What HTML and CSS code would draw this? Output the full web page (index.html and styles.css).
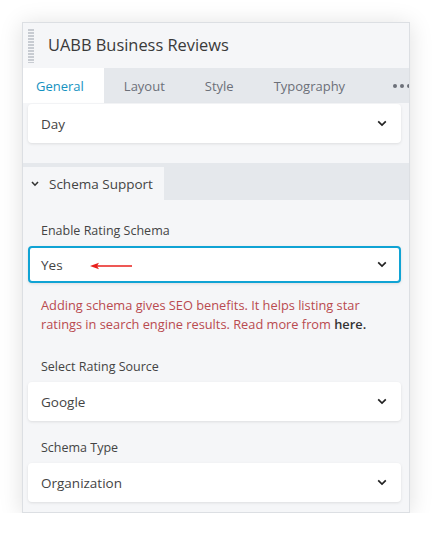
FILE: index.html
```html
<!DOCTYPE html>
<html>
<head>
<meta charset="utf-8">
<link rel="stylesheet" href="styles.css">
</head>
<body>
<div class="panel">
  <div class="header">
    <div class="grip"></div>
    <div class="title">UABB Business Reviews</div>
  </div>
  <div class="tabs">
    <div class="tab active">General</div>
    <div class="tab">Layout</div>
    <div class="tab">Style</div>
    <div class="tab">Typography</div>
    <div class="tab more"><span class="dot"></span><span class="dot"></span><span class="dot"></span></div>
  </div>
  <div class="content">
    <div class="select first">
      <span>Day</span>
      <svg class="chev" width="10" height="7" viewBox="0 0 10 7"><path d="M1.2 1.4 L5 5 L8.8 1.4" fill="none" stroke="#222" stroke-width="1.7"/></svg>
    </div>
    <div class="section">
      <div class="section-tab">
        <svg class="schev" width="8" height="6" viewBox="0 0 8 6"><path d="M1 1 L4 4.2 L7 1" fill="none" stroke="#333" stroke-width="1.6"/></svg>
        <span>Schema Support</span>
      </div>
    </div>
    <div class="fields">
      <div class="label">Enable Rating Schema</div>
      <div class="select focus">
        <span>Yes</span>
        <svg class="arrow" width="44" height="8" viewBox="0 0 44 8"><path d="M4 4 H42" stroke="#e8201c" stroke-width="1.6"/><path d="M0 4 L9 0.8 L7 4 L9 7.2 Z" fill="#e8201c"/></svg>
        <svg class="chev" width="10" height="7" viewBox="0 0 10 7"><path d="M1.2 1.4 L5 5 L8.8 1.4" fill="none" stroke="#222" stroke-width="1.7"/></svg>
      </div>
      <p class="help"><span>Adding schema gives SEO benefits. It helps listing star</span><br><span>ratings in search engine results. Read more from</span> <b class="link">here.</b></p>
      <div class="label">Select Rating Source</div>
      <div class="select">
        <span>Google</span>
        <svg class="chev" width="10" height="7" viewBox="0 0 10 7"><path d="M1.2 1.4 L5 5 L8.8 1.4" fill="none" stroke="#222" stroke-width="1.7"/></svg>
      </div>
      <div class="label">Schema Type</div>
      <div class="select">
        <span>Organization</span>
        <svg class="chev" width="10" height="7" viewBox="0 0 10 7"><path d="M1.2 1.4 L5 5 L8.8 1.4" fill="none" stroke="#222" stroke-width="1.7"/></svg>
      </div>
    </div>
  </div>
</div>
</body>
</html>
```
FILE: styles.css
```css
html, body {
  margin: 0;
  padding: 0;
  background: #ffffff;
}
body {
  font-family: "Open Sans", "Noto Sans", sans-serif;
  color: #444;
  padding: 22px 0 0 22px;
}
.panel {
  width: 386px;
  border: 1px solid #dcdfe3;
  background: #f5f6f8;
  box-shadow: 0 2px 22px rgba(0, 0, 0, 0.13);
  padding-bottom: 10px;
  overflow: hidden;
}
.header {
  height: 45px;
  display: flex;
  align-items: center;
  background: #f5f6f8;
}
.grip {
  width: 6px;
  height: 34px;
  margin-left: 5px;
  background: repeating-linear-gradient(to bottom, #c8ccd2 0 2px, transparent 2px 3px);
}
.title {
  margin-left: 14px;
  font-size: 16.4px;
  color: #3a3a3a;
  margin-top: -2px;
}
.tabs {
  height: 35px;
  display: flex;
  background: #e5e8ec;
  font-size: 13px;
  color: #6c7079;
}
.tab {
  padding: 0 20px;
  display: flex;
  align-items: center;
  flex-shrink: 0;
}
.tab.active {
  background: #ffffff;
  color: #1592c1;
  padding-left: 13px;
}
.tab.more {
  margin-left: 28px;
  gap: 3px;
  padding-right: 0;
  padding-left: 0;
}
.dot {
  width: 4px;
  height: 4px;
  border-radius: 50%;
  background: #6c7079;
  flex-shrink: 0;
}
.content {
  padding: 1px 0 0 0;
}
.select {
  height: 39px;
  margin: 0 8px 0 5px;
  background: #fff;
  border-radius: 4px;
  box-shadow: 0 1px 3px rgba(0, 0, 0, 0.1);
  display: flex;
  align-items: center;
  padding: 0 14px 0 13px;
  font-size: 13.5px;
  color: #444;
  position: relative;
}
.select span {
  flex: 1;
}
.select.focus {
  height: 33px;
  border: 2px solid #10a3d4;
  padding-left: 11px;
  padding-right: 12px;
}
.arrow {
  position: absolute;
  left: 60px;
  top: 14px;
}
.section {
  margin-top: 20px;
  height: 37px;
  background: #e5e8ec;
  display: flex;
  align-items: flex-end;
}
.section-tab {
  height: 33px;
  width: 141px;
  background: #f5f6f8;
  display: flex;
  align-items: center;
  font-size: 13.5px;
  color: #444;
}
.schev {
  margin-left: 8px;
  margin-right: 10px;
}
.fields {
  padding-top: 21px;
}
.label {
  font-size: 12.5px;
  line-height: 20px;
  margin: 0 0 5px 18px;
  color: #444;
}
.help {
  margin: 13px 12px 23px 18px;
  font-size: 12.8px;
  line-height: 19px;
  color: #b94a4f;
  white-space: nowrap;
}
.help .link {
  color: #333;
  font-weight: 600;
}
.select + .label {
  margin-top: 17px;
}
```
